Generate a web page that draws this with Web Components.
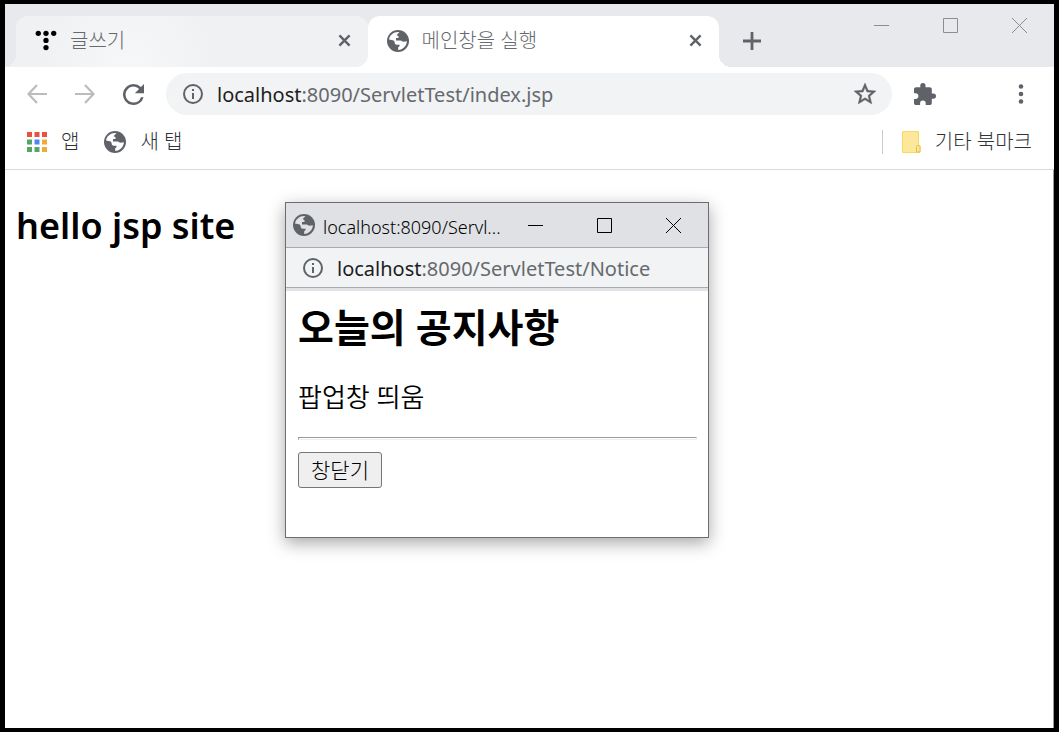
<!DOCTYPE html>
<html lang="ko">
<head>
<meta charset="utf-8">
<title>메인창을 실행</title>
<style>
  body { margin: 0; background: #000; font-family: "Noto Sans", "Noto Sans CJK KR", sans-serif; }
</style>
</head>
<body>
<browser-window>
  <tab-strip slot="tabs">
    <browser-tab icon="tistory">글쓰기</browser-tab>
    <browser-tab icon="globe" active>메인창을 실행</browser-tab>
  </tab-strip>
  <tool-bar slot="toolbar"><url-text slot="url" host="localhost" path=":8090/ServletTest/index.jsp"></url-text></tool-bar>
  <bookmark-bar slot="bookmarks"></bookmark-bar>
  <main-page></main-page>
  <popup-window slot="popup" caption="localhost:8090/Servl...">
    <url-text slot="url" host="localhost" path=":8090/ServletTest/Notice"></url-text>
    <notice-page></notice-page>
  </popup-window>
</browser-window>
<script>
const ICONS = {
  globe: ['1 1 22 22', '<circle cx="12" cy="12" r="11" fill="#5f6368"/><path fill="var(--hole,#fff)" d="M3 10.500C3.700 6.200 7.500 3 12 3l1.500.2c-1 1.300-2.600 1.800-2.600 3.300 1.800.3 2 1.300 1.500 2.500H10v2.500h4.500c1.500 0 1.800 1.300 3 1.300l3.400-.5c-.2 4.500-4 8.500-8.700 8.700v-2.700c1-.6 1.600-1.300 1.400-2.600h-2.700c-1.500 0-2.300-1-2.300-2.500 0-1.300-1.300-2.200-3-2.200z"/>'],
  tistory: ['0 0 20 20', '<g fill="#000"><circle cx="3" cy="3" r="2.400"/><circle cx="10" cy="3" r="2.400"/><circle cx="17" cy="3" r="2.400"/><circle cx="10" cy="9.500" r="2.400"/><circle cx="10" cy="16" r="2.400"/></g>'],
  close: ['0 0 14 14', '<path d="M1.500 1.500l11 11M12.500 1.500l-11 11" stroke="#5f6368" stroke-width="2.600" fill="none"/>'],
  plus: ['0 0 18 18', '<path d="M9 0v18M0 9h18" stroke="#5f6368" stroke-width="2.800" fill="none"/>'],
  back: ['0 0 20 20', '<path d="M20 10H1.500M10 1L1.500 10l8.500 9" stroke="#babcbe" stroke-width="2.200" fill="none"/>'],
  forward: ['0 0 20 20', '<path d="M0 10h18.500M10 1l8.500 9-8.500 9" stroke="#babcbe" stroke-width="2.200" fill="none"/>'],
  reload: ['4 4 16 16', '<path fill="#5f6368" d="M17.650 6.350A7.958 7.958 0 0 0 12 4a8 8 0 1 0 7.730 10h-2.080A5.990 5.990 0 0 1 12 18a6 6 0 1 1 4.220-10.220L13 11h7V4z"/>'],
  info: ['2 2 20 20', '<path fill="#5f6368" d="M11 7h2v2h-2zm0 4h2v6h-2zm1-9a10 10 0 1 0 0 20 10 10 0 0 0 0-20zm0 18a8 8 0 1 1 0-16 8 8 0 0 1 0 16z"/>'],
  star: ['2 2 20 20', '<path fill="#5f6368" stroke="#5f6368" stroke-width=".4" d="M22 9.240l-7.190-.62L12 2 9.190 8.630 2 9.240l5.460 4.730L5.820 21 12 17.270 18.180 21l-1.630-7.030zM12 15.400l-3.760 2.270 1-4.280-3.320-2.880 4.380-.38L12 6.100l1.710 4.040 4.380.38-3.320 2.880 1 4.280z"/>'],
  puzzle: ['2 1 21 21', '<path fill="#5f6368" d="M20.500 11H19V7c0-1.100-.9-2-2-2h-4V3.500a2.500 2.500 0 0 0-5 0V5H4c-1.100 0-2 .9-2 2v3.800h1.500a2.700 2.700 0 0 1 0 5.400H2V20c0 1.100.9 2 2 2h3.800v-1.500a2.700 2.700 0 0 1 5.400 0V22H17c1.100 0 2-.9 2-2v-4h1.500a2.500 2.500 0 0 0 0-5z"/>'],
  dots: ['0 0 20 20', '<g fill="#5f6368"><circle cx="10" cy="2.500" r="2.300"/><circle cx="10" cy="10" r="2.300"/><circle cx="10" cy="17.500" r="2.300"/></g>'],
  apps: ['0 0 20 20', '<g fill="#ea4f40"><path d="M0 0h5v5H0zM7.500 0h5v5h-5zM15 0h5v5h-5z"/></g><g fill="#55a564"><path d="M0 7.500h5v5H0zM0 15h5v5H0zM7.500 15h5v5h-5z"/></g><path fill="#4688f4" d="M7.500 7.500h5v5h-5z"/><g fill="#eeaa3b"><path d="M15 7.500h5v5h-5zM15 15h5v5h-5z"/></g>'],
  folder: ['1 0 19 22', '<path d="M1.500.5h16v14.500h1.500v6.500H1.500z" fill="#fce79a" stroke="#f5d962"/><path d="M15.500 21v-5.500q0-1 1-1h1.500q1 0 1 1V21z" fill="#fce79a" stroke="#e3bf45"/>'],
  minimize: ['0 0 15 15', '<path d="M0 7.500h15" stroke="currentColor" fill="none"/>'],
  maximize: ['0 0 15 15', '<path d="M.5.5h14v14H.5z" stroke="currentColor" fill="none"/>'],
  exit: ['0 0 15 15', '<path d="M0 0l15 15M15 0L0 15" stroke="currentColor" fill="none"/>']
};
const icon = (name, w, h = w) => `<svg width="${w}" height="${h}" viewBox="${ICONS[name][0]}" preserveAspectRatio="none" aria-hidden="true">${ICONS[name][1]}</svg>`;
const BASE = `
  * { box-sizing: border-box; }
  svg { display: block; flex: none; }
  button { font: inherit; color: inherit; background: none; border: 0; padding: 0; display: flex; align-items: center; justify-content: center; flex: none; }
  a { color: inherit; text-decoration: none; }`;
function define(name, css, markup) {
  customElements.define(name, class extends HTMLElement {
    constructor() {
      super();
      this.attachShadow({ mode: 'open' }).innerHTML =
        `<style>${BASE}${css}</style>${typeof markup === 'function' ? markup(this) : markup}`;
    }
  });
}

define('browser-window', `
  :host { display: flex; flex-direction: column; box-sizing: border-box; min-height: 100vh; border: solid #000; border-width: 4px 5px; }
  .page { position: relative; flex: 1; background: #fff; border-right: 1px solid #999; }
  ::slotted(popup-window) { position: absolute; left: 280px; top: 32px; }`,
  `<slot name="tabs"></slot><slot name="toolbar"></slot><slot name="bookmarks"></slot>
   <div class="page"><slot></slot><slot name="popup"></slot></div>`);

define('window-controls', `
  :host { display: flex; flex: none; }
  button { width: 69px; height: 43px; }`,
  `<button aria-label="최소화">${icon('minimize', 15)}</button>
   <button aria-label="최대화">${icon('maximize', 15)}</button>
   <button aria-label="닫기">${icon('exit', 15)}</button>`);

define('tab-strip', `
  :host { display: flex; align-items: flex-start; background: #e8e9ed; padding-left: 11px; }
  .tabs { display: flex; flex: 0 1 703px; min-width: 0; padding-top: 12px; }
  .new { width: 44px; height: 50px; margin: 12px auto 0 11px; }
  window-controls { color: #8c8d91; }`,
  `<div class="tabs"><slot></slot></div>
   <button class="new" aria-label="새 탭">${icon('plus', 18)}</button>
   <window-controls></window-controls>`);

define('browser-tab', `
  :host { position: relative; flex: 1; min-width: 0; display: flex; align-items: center; box-sizing: border-box; height: 51px;
    padding: 0 16px 2px 19px; gap: 13px; border-radius: 12px 12px 0 0; font-size: 20px; font-weight: 300; line-height: 28px; color: #66696d;
    --fill: #f0f1f3; background: radial-gradient(circle 90px at 112px 50px, #f6f7f8, #f0f1f3); }
  :host([active]) { --fill: #fff; background: #fff; }
  :host::before, :host::after { content: ""; position: absolute; bottom: 0; width: 12px; height: 12px; }
  :host::before { right: 100%; background: radial-gradient(circle at 0 0, transparent 12px, var(--fill) 12px); }
  :host::after { left: 100%; background: radial-gradient(circle at 100% 0, transparent 12px, var(--fill) 12px); }
  a { flex: 1; min-width: 0; overflow: hidden; white-space: nowrap; }
  button { width: 15px; height: 28px; }`,
  el => `${icon(el.getAttribute('icon'), 22)}<a href="#"><slot></slot></a><button aria-label="탭 닫기">${icon('close', 13)}</button>`);

define('url-text', `
  :host { flex: 1; min-width: 0; padding-top: 2px; font-size: 20px; line-height: 28px; white-space: nowrap; color: #66696d; }
  div { outline: 0; }
  b { font-weight: 400; color: #1c1d1f; }`,
  el => `<div role="textbox" aria-label="주소" contenteditable="true" spellcheck="false"><b>${el.getAttribute('host')}</b>${el.getAttribute('path')}</div>`);

define('tool-bar', `
  :host { display: flex; align-items: center; background: #fff; padding: 6px 23px 0 8px; }
  .nav { width: 48px; height: 42px; }
  .address { display: flex; align-items: center; gap: 14px; flex: 1; min-width: 0; height: 42px; margin: 0 22px 0 9px; padding: 0 16px 0 17px; border-radius: 21px; background: #f1f3f4; }
  .menu { margin-left: 75px; }`,
  `<button class="nav" aria-label="뒤로">${icon('back', 20)}</button>
   <button class="nav" aria-label="앞으로">${icon('forward', 20)}</button>
   <button class="nav" aria-label="새로고침">${icon('reload', 21)}</button>
   <div class="address">${icon('info', 20)}<slot name="url"></slot><button aria-label="북마크에 추가">${icon('star', 22)}</button></div>
   <button aria-label="확장 프로그램">${icon('puzzle', 22)}</button>
   <button class="menu" aria-label="메뉴">${icon('dots', 20)}</button>`);

define('bookmark-bar', `
  :host { display: flex; align-items: center; height: 55px; box-sizing: border-box; border-bottom: 1px solid #d9dadc; background: #fff; padding: 0 22px; font-size: 20px; font-weight: 300; line-height: 28px; color: #303236; }
  a { display: flex; align-items: center; gap: 14px; margin-right: 25px; white-space: nowrap; }
  .other { margin: 0 0 0 auto; }
  .other::before { content: ""; width: 1px; height: 24px; background: #c9cbce; margin-right: 5px; }`,
  `<a href="#">${icon('apps', 20)}앱</a><a href="#">${icon('globe', 22)}새 탭</a>
   <a class="other" href="#">${icon('folder', 19, 22)}기타 북마크</a>`);

define('main-page', `
  :host { display: block; padding: 32px 11px; }
  h1 { margin: 0; font-size: 36px; line-height: 48px; font-weight: 600; }`,
  `<h1>hello jsp site</h1>`);

define('popup-window', `
  :host { box-sizing: border-box; width: 424px; min-height: 336px; border: 1px solid #6c6d70; background: #fff; box-shadow: 0 5px 16px rgba(0,0,0,.35); }
  header { display: flex; align-items: center; height: 45px; padding-left: 7px; background: #dfe1e5; border-bottom: 1px solid #a9abae; --hole: #dfe1e5; }
  .title { flex: 1; margin-left: 8px; padding-top: 4px; font-size: 18px; font-weight: 300; line-height: 28px; white-space: nowrap; }
  .address { display: flex; align-items: center; gap: 14px; height: 40px; padding-left: 17px; background: #f1f3f4; border-bottom: 1px solid #a9abae; }
  .edge { height: 3px; background: #e1e3e6; }`,
  el => `<header>${icon('globe', 22)}<span class="title">${el.getAttribute('caption')}</span><window-controls></window-controls></header>
   <div class="address">${icon('info', 20)}<slot name="url"></slot></div><div class="edge"></div><slot></slot>`);

define('notice-page', `
  :host { display: block; padding: 8px 11px 8px 12px; }
  h2 { margin: 0; font-size: 39px; line-height: 56px; font-weight: 700; }
  p { margin: 24px 0 22px; font-size: 26px; line-height: 36px; font-weight: 350; }
  hr { margin: 0 0 12px; height: 3px; border: 1px inset #eee; }
  button { width: 84px; height: 36px; border: 1px solid #767676; border-radius: 3px; background: #efefef; color: #000; font-size: 21px; font-weight: 300; line-height: 28px; }`,
  `<h2>오늘의 공지사항</h2><p>팝업창 띄움</p><hr><button>창닫기</button>`);
</script>
</body>
</html>
